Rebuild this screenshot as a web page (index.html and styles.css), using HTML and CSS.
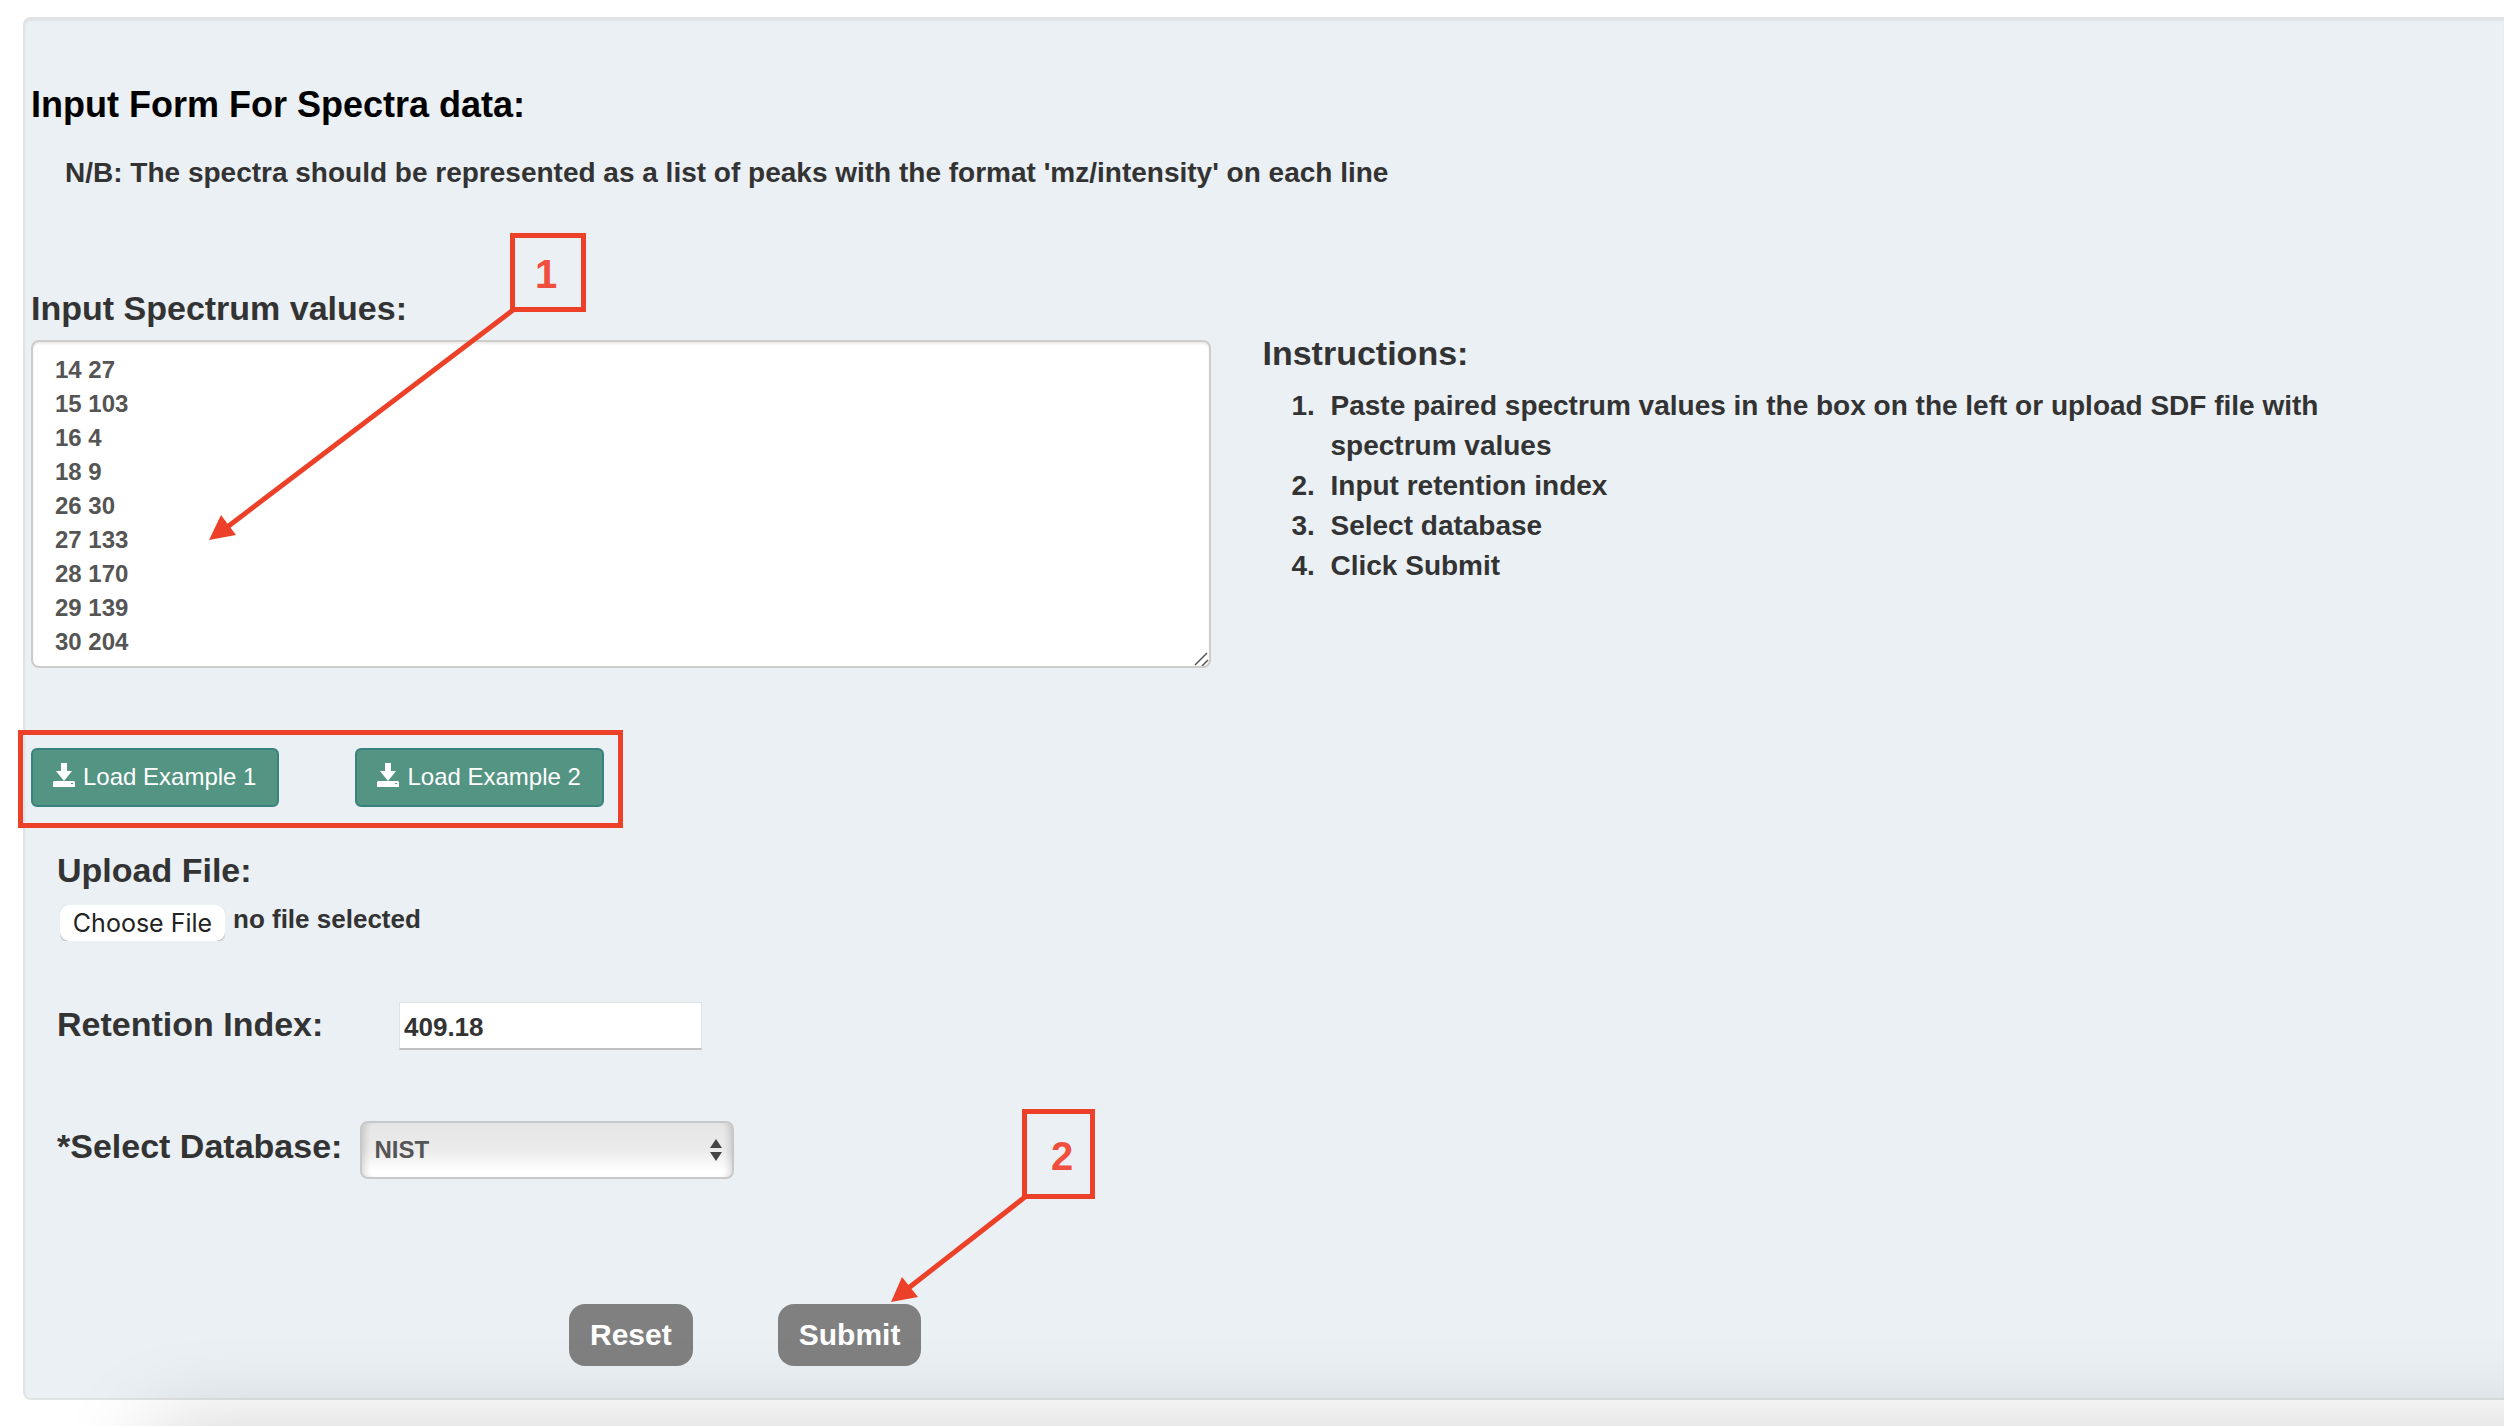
FILE: index.html
```
<!DOCTYPE html>
<html lang="en">
<head>
<meta charset="utf-8">
<title>Input Form For Spectra data</title>
<link rel="stylesheet" href="styles.css">
</head>

<body>

<form class="well">
	<h1 class="form-title">Input Form For Spectra data:</h1>
	<p class="note">N/B: The spectra should be represented as a list of peaks with the format 'mz/intensity' on each line</p>

	<div class="columns">
		<div class="column">
			<label class="field-label" for="spectrum">Input Spectrum values:</label>
			<textarea id="spectrum" class="spectrum">
14 27
15 103
16 4
18 9
26 30
27 133
28 170
29 139
30 204
31 14
32 13</textarea>
		</div>
		<div class="column instructions">
			<h2 class="field-label">Instructions:</h2>
			<ol class="steps">
				<li>Paste paired spectrum values in the box on the left or upload SDF file with spectrum values</li>
				<li>Input retention index</li>
				<li>Select database</li>
				<li>Click Submit</li>
			</ol>
		</div>
	</div>

	<div class="examples">
		<button type="button" class="btn-example">
			<svg class="icon" viewBox="0 0 22 24"><path d="M8 0h6v8h5l-8 10-8-10h5z"/><path fill-rule="evenodd" d="M1 18h20l1 1v5H0v-5zM18 20v1h2v-1z"/></svg>
			Load Example 1
		</button>
		<button type="button" class="btn-example">
			<svg class="icon" viewBox="0 0 22 24"><path d="M8 0h6v8h5l-8 10-8-10h5z"/><path fill-rule="evenodd" d="M1 18h20l1 1v5H0v-5zM18 20v1h2v-1z"/></svg>
			Load Example 2
		</button>
	</div>

	<div class="fields">
		<label class="field-label" for="upload">Upload File:</label>
		<div class="file-row">
			<input type="file" id="upload" class="file-input">
			<span class="file-name">no file selected</span>
		</div>

		<div class="form-row">
			<label class="field-label retention-label" for="retention">Retention Index:</label>
			<input type="text" id="retention" class="retention-input" value="409.18">
		</div>

		<div class="form-row database-row">
			<label class="field-label" for="database">*Select Database:</label>
			<div class="select-box">
				<select id="database" class="database-select">
					<option>NIST</option>
				</select>
				<svg class="select-arrows" viewBox="0 0 12 22"><path d="M0 9l6-9 6 9zM0 13h12l-6 9z"/></svg>
			</div>
		</div>
	</div>

	<div class="actions">
		<button type="reset" class="btn-action">Reset</button>
		<button type="submit" class="btn-action">Submit</button>
	</div>
</form>

<!-- step markers drawn over the form -->
<svg class="markers" width="1120" height="1320" viewBox="0 0 1120 1320">
	<g class="marker-line">
		<rect x="512.5" y="235.5" width="71" height="74"/>
		<path d="M513 310L226 528"/>
		<rect x="20.5" y="732.5" width="600" height="93"/>
		<rect x="1024.5" y="1111.5" width="68" height="85"/>
		<path d="M1025 1197L906 1290"/>
	</g>
	<path class="marker-head" d="M209 540l12-25 15 20zM891 1302l11-25 16 20z"/>
	<text class="marker-number" x="535" y="288">1</text>
	<text class="marker-number" x="1051" y="1170">2</text>
</svg>

<div class="bottom-shadow"></div>

</body>
</html>
```
FILE: styles.css
```
* {
	box-sizing: border-box;
}
body {
	margin: 17px 0 0 23px;
	background: #fff;
	color: #333;
	font-family: "Liberation Sans", Arial, sans-serif;
	font-size: 28px;
	font-weight: bold;
	line-height: 40px;
	overflow: hidden;
}
.well {
	padding: 66px 62px 32px 6px;
	background: #eaf0f3;
	border: 2px solid #e0e3e4;
	border-right: 0;
	border-radius: 8px 0 0 8px;
	box-shadow: inset 0 2px 2px rgba(0, 0, 0, 0.05);
}
.form-title {
	margin: 0;
	color: #000;
	font-size: 36px;
}
.note {
	margin: 28px 0 0;
	padding-left: 34px;
}
.columns {
	display: flex;
	gap: 52px;
	margin-top: 95px;
}
.column {
	flex: 1;
}
.field-label {
	display: block;
	margin: 0;
	font-size: 34px;
	line-height: 40px;
}
.spectrum {
	display: block;
	width: 100%;
	height: 328px;
	margin-top: 12px;
	padding: 11px 22px;
	border: 2px solid #ccc;
	border-radius: 8px;
	box-shadow: inset 0 2px 2px rgba(0, 0, 0, 0.08);
	color: #555;
	font: bold 24px/34px "Liberation Sans", Arial, sans-serif;
	overflow: hidden;
}
.spectrum::-webkit-resizer {
	background: url("data:image/svg+xml,%3Csvg xmlns='http://www.w3.org/2000/svg' viewBox='0 0 15 15'%3E%3Cpath d='M1 14L13 2M8 15l6-6' stroke='%23555' stroke-width='1.5'/%3E%3C/svg%3E") no-repeat;
}
.instructions {
	padding-top: 45px;
}
.steps {
	margin: 13px 0 0;
	padding-left: 68px;
	list-style: none;
	counter-reset: step;
}
.steps li {
	counter-increment: step;
}
.steps li::before {
	content: counter(step) ".";
	float: left;
	margin-left: -39px;
}

.examples {
	display: flex;
	gap: 76px;
	margin-top: 80px;
}
.btn-example {
	display: flex;
	align-items: center;
	gap: 8px;
	height: 59px;
	padding: 0 21px 2px 20px;
	background: #549483;
	border: 2px solid #38827f;
	border-radius: 6px;
	color: #fff;
	font: 24px/34px "Liberation Sans", Arial, sans-serif;
}
.icon {
	width: 22px;
	height: 24px;
	margin-bottom: 4px;
	fill: #fff;
}

.fields {
	margin-top: 43px;
	padding-left: 26px;
}
.file-row {
	display: flex;
	gap: 8px;
	margin: 15px 0 0 3px;
}
.file-input {
	width: 165px;
	height: 36px;
	color: transparent;
	overflow: visible;
}
.file-input::file-selector-button {
	width: 165px;
	height: 36px;
	margin: 0;
	padding: 0;
	background: #fff;
	border: 0;
	border-radius: 9px;
	box-shadow: 0 1px 2px rgba(0, 0, 0, 0.3);
	color: #222;
	font: 25px/36px Inter, sans-serif;
}
.file-name {
	font-size: 26px;
	line-height: 28px;
}
.form-row {
	display: flex;
	align-items: baseline;
	margin-top: 61px;
}
.retention-label {
	width: 342px;
}
.retention-input {
	width: 303px;
	height: 48px;
	padding: 3px 4px 0;
	background: #fff;
	border: 1px solid #e0e3e5;
	border-bottom: 2px solid #bfc1c2;
	color: #333;
	font: bold 26px "Liberation Sans", Arial, sans-serif;
}
.database-row {
	gap: 18px;
	margin-top: 71px;
}
.select-box {
	position: relative;
}
.database-select {
	width: 374px;
	height: 58px;
	padding: 0 12px 2px;
	appearance: none;
	background: linear-gradient(#e6e6e6, #ebebeb 50%, #fff 90%);
	border: 2px solid #c8c8c8;
	border-radius: 8px;
	box-shadow: inset 8px 0 6px -5px rgba(0, 0, 0, 0.14), inset -8px 0 6px -5px rgba(0, 0, 0, 0.14);
	color: #555;
	font: bold 24px "Liberation Sans", Arial, sans-serif;
}
.select-arrows {
	position: absolute;
	top: 18px;
	right: 12px;
	width: 12px;
	height: 22px;
	fill: #444;
	pointer-events: none;
}
.actions {
	display: flex;
	gap: 85px;
	margin-top: 125px;
	padding-left: 538px;
}
.btn-action {
	height: 62px;
	padding: 0 21px;
	background: #808080;
	border: 0;
	border-radius: 16px;
	color: #fff;
	font: bold 30px "Liberation Sans", Arial, sans-serif;
}

.markers {
	position: absolute;
	top: 0;
	left: 0;
	pointer-events: none;
}
.marker-line {
	fill: none;
	stroke: #ec4128;
	stroke-width: 5;
}
.marker-head {
	fill: #ec4128;
}
.marker-number {
	fill: #f04f3e;
	font-size: 40px;
}
/* shadow of the bar that sits just under the window */
.bottom-shadow {
	position: fixed;
	top: 100%;
	left: 150px;
	right: -100px;
	height: 100px;
	box-shadow: 0 0 90px rgba(0, 0, 0, 0.18);
}
```
